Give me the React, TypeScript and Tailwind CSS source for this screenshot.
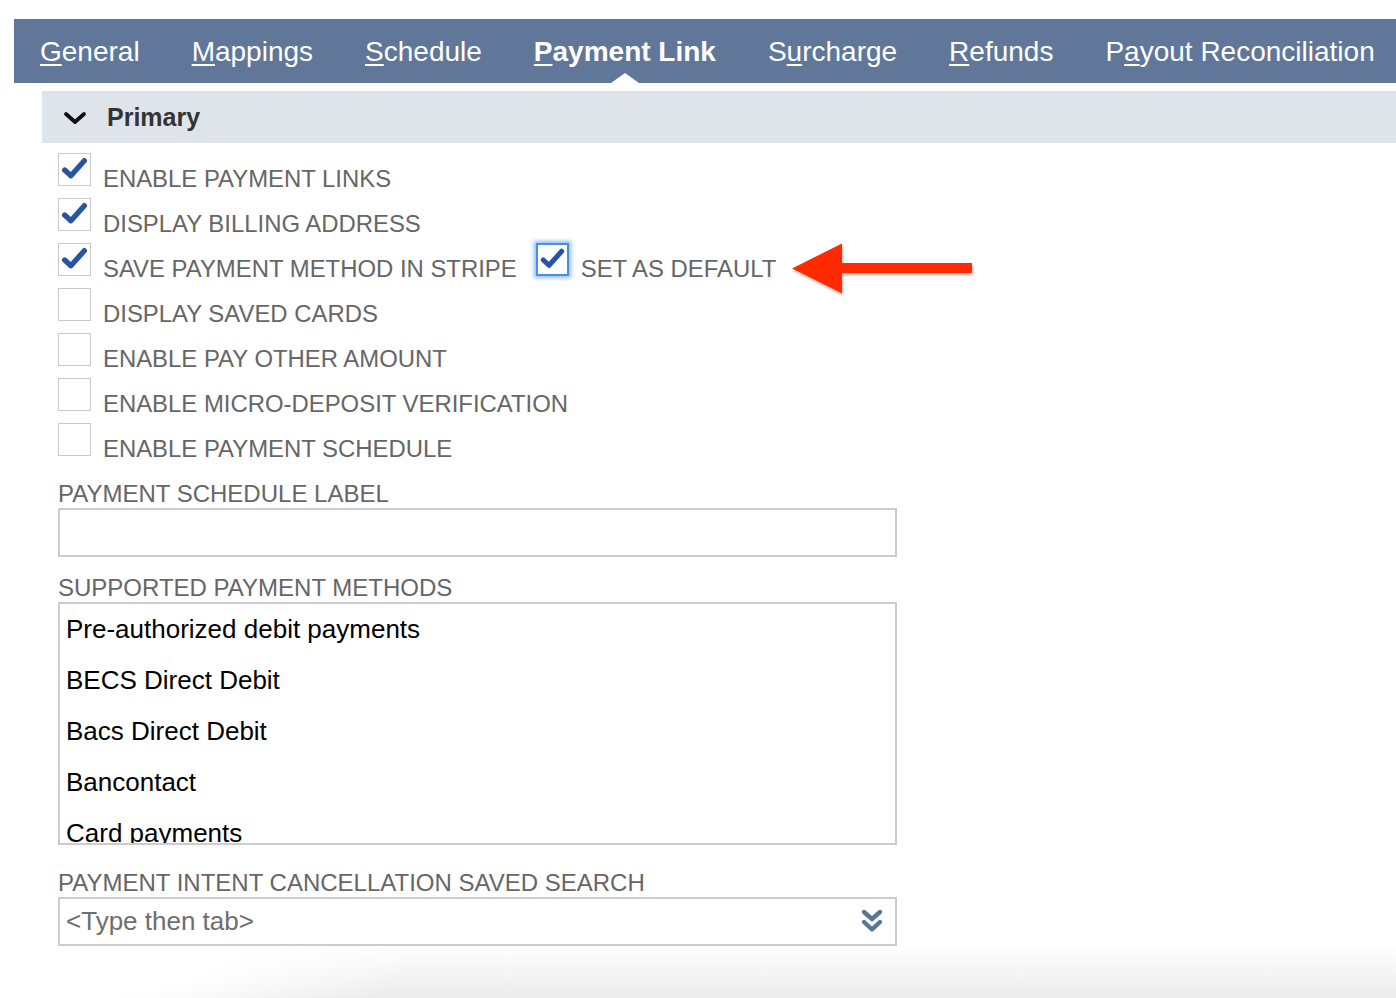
import clsx from 'clsx'

const tabs = [
  { pre: '', key: 'G', post: 'eneral' },
  { pre: '', key: 'M', post: 'appings' },
  { pre: '', key: 'S', post: 'chedule' },
  { pre: '', key: 'P', post: 'ayment Link', active: true },
  { pre: 'S', key: 'u', post: 'rcharge' },
  { pre: '', key: 'R', post: 'efunds' },
  { pre: 'P', key: 'a', post: 'yout Reconciliation' },
]

const options = [
  { label: 'ENABLE PAYMENT LINKS', checked: true },
  { label: 'DISPLAY BILLING ADDRESS', checked: true },
  { label: 'SAVE PAYMENT METHOD IN STRIPE', checked: true, extra: true },
  { label: 'DISPLAY SAVED CARDS', checked: false },
  { label: 'ENABLE PAY OTHER AMOUNT', checked: false },
  { label: 'ENABLE MICRO-DEPOSIT VERIFICATION', checked: false },
  { label: 'ENABLE PAYMENT SCHEDULE', checked: false },
]

const methods = [
  'Pre-authorized debit payments',
  'BECS Direct Debit',
  'Bacs Direct Debit',
  'Bancontact',
  'Card payments',
]

function Checkbox({ checked, focused }: { checked: boolean; focused?: boolean }) {
  return (
    <span
      className={clsx(
        'mt-[2px] block h-[33px] w-[33px] shrink-0 bg-white',
        focused
          ? 'border-[2.5px] border-[#4a8fe2] shadow-[0_0_4px_2px_rgba(74,143,226,0.6)]'
          : 'border-[1.5px] border-[#c9c9c9]'
      )}
    >
      {checked && (
        <svg viewBox="0 0 30 30" className="h-full w-full">
          <path
            d="M5.5 15.5 L11.5 21 L24.5 6.5"
            fill="none"
            stroke="#2855a1"
            strokeWidth="5.2"
            strokeLinecap="round"
            strokeLinejoin="round"
          />
        </svg>
      )}
    </span>
  )
}

function RedArrow() {
  return (
    <svg width="186" height="56" viewBox="0 0 186 56" className="ml-[14px] shrink-0">
      <defs>
        <filter id="arrowShadow" x="-10%" y="-20%" width="120%" height="150%">
          <feDropShadow dx="1" dy="2" stdDeviation="1.4" floodColor="#000" floodOpacity="0.3" />
        </filter>
      </defs>
      <polygon
        points="2,27.5 52,2.5 52,22 182,22 182,32 52,32 52,52.5"
        fill="#ff2a00"
        filter="url(#arrowShadow)"
      />
    </svg>
  )
}

function FieldLabel({ children, className }: { children: string; className?: string }) {
  return <div className={clsx('text-[24px] leading-[27px] text-[#666666]', className)}>{children}</div>
}

export default function App() {
  return (
    <div
      className="relative min-h-[998px] w-full overflow-hidden bg-white pl-[14px] pt-[19px] antialiased"
      style={{ fontFamily: '"Liberation Sans", Arial, sans-serif' }}
    >
      {/* soft shadow at the bottom of the page */}
      <div className="pointer-events-none absolute bottom-0 left-0 right-0 h-[54px] bg-[linear-gradient(to_bottom,#ffffff,#ececec)]">
        <div className="absolute inset-0 bg-[radial-gradient(ellipse_420px_110px_at_0%_0%,#ffffff_55%,rgba(255,255,255,0)_100%)]" />
      </div>

      <div className="relative z-10">
        {/* Tab bar */}
        <nav className="flex h-[64px] items-stretch gap-[52px] bg-[#607799] pl-[26px] text-[28px] text-white">
          {tabs.map((tab) => (
            <span
              key={tab.key + tab.post}
              className={clsx('relative flex items-center whitespace-nowrap pt-[2px]', tab.active && 'font-bold')}
            >
              {tab.pre}
              <span className="underline decoration-2 underline-offset-[3px]">{tab.key}</span>
              {tab.post}
              {tab.active && (
                <span className="absolute bottom-0 left-1/2 h-0 w-0 -translate-x-1/2 border-x-[14px] border-b-[10px] border-x-transparent border-b-white" />
              )}
            </span>
          ))}
        </nav>

        <div className="ml-[28px] mt-[8px]">
          {/* Section header */}
          <div className="flex h-[52px] items-center bg-[#dfe4eb] pl-[21px] pt-[2px]">
            <svg width="24" height="14" viewBox="0 0 24 14" className="shrink-0">
              <path d="M3 3 L12 11 L21 3" fill="none" stroke="#111" strokeWidth="3.8" strokeLinecap="round" strokeLinejoin="round" />
            </svg>
            <span className="ml-[20px] text-[25px] font-bold text-[#333333]">Primary</span>
          </div>

          <div className="pl-[16px] pt-[8px]">
            {/* Checkbox rows */}
            {options.map((opt) => (
              <div key={opt.label} className="flex h-[45px] items-start">
                <Checkbox checked={opt.checked} />
                <span className="ml-[12px] mt-[14px] whitespace-nowrap text-[23.9px] leading-[27px] text-[#666666]">
                  {opt.label}
                </span>
                {opt.extra && (
                  <>
                    <span className="ml-[19px]">
                      <Checkbox checked focused />
                    </span>
                    <span className="ml-[12px] mt-[14px] whitespace-nowrap text-[23.9px] leading-[27px] text-[#666666]">
                      SET AS DEFAULT
                    </span>
                    <RedArrow />
                  </>
                )}
              </div>
            ))}

            <FieldLabel className="mt-[14px]">PAYMENT SCHEDULE LABEL</FieldLabel>
            <div className="mt-[1px] h-[49px] w-[839px] border-2 border-[#cccccc] bg-white" />

            <FieldLabel className="mt-[17px]">SUPPORTED PAYMENT METHODS</FieldLabel>
            <div className="mt-[1px] h-[243px] w-[839px] overflow-hidden border-2 border-[#cccccc] bg-white pt-[2px]">
              {methods.map((m) => (
                <div key={m} className="h-[51px] whitespace-nowrap pl-[6px] text-[26px] leading-[47px] text-black">
                  {m}
                </div>
              ))}
            </div>

            <FieldLabel className="mt-[24px]">PAYMENT INTENT CANCELLATION SAVED SEARCH</FieldLabel>
            <div className="mt-[1px] flex h-[49px] w-[839px] items-center justify-between border-2 border-[#cccccc] bg-white pl-[6px] pr-[11px]">
              <span className="text-[26px] text-[#6e6e6e]">&lt;Type then tab&gt;</span>
              <svg width="24" height="27" viewBox="0 0 24 27">
                <path
                  d="M4 4 L12 11 L20 4 M4 14 L12 21.5 L20 14"
                  fill="none"
                  stroke="#5b7599"
                  strokeWidth="4.4"
                  strokeLinecap="round"
                  strokeLinejoin="round"
                />
              </svg>
            </div>
          </div>
        </div>
      </div>
    </div>
  )
}
